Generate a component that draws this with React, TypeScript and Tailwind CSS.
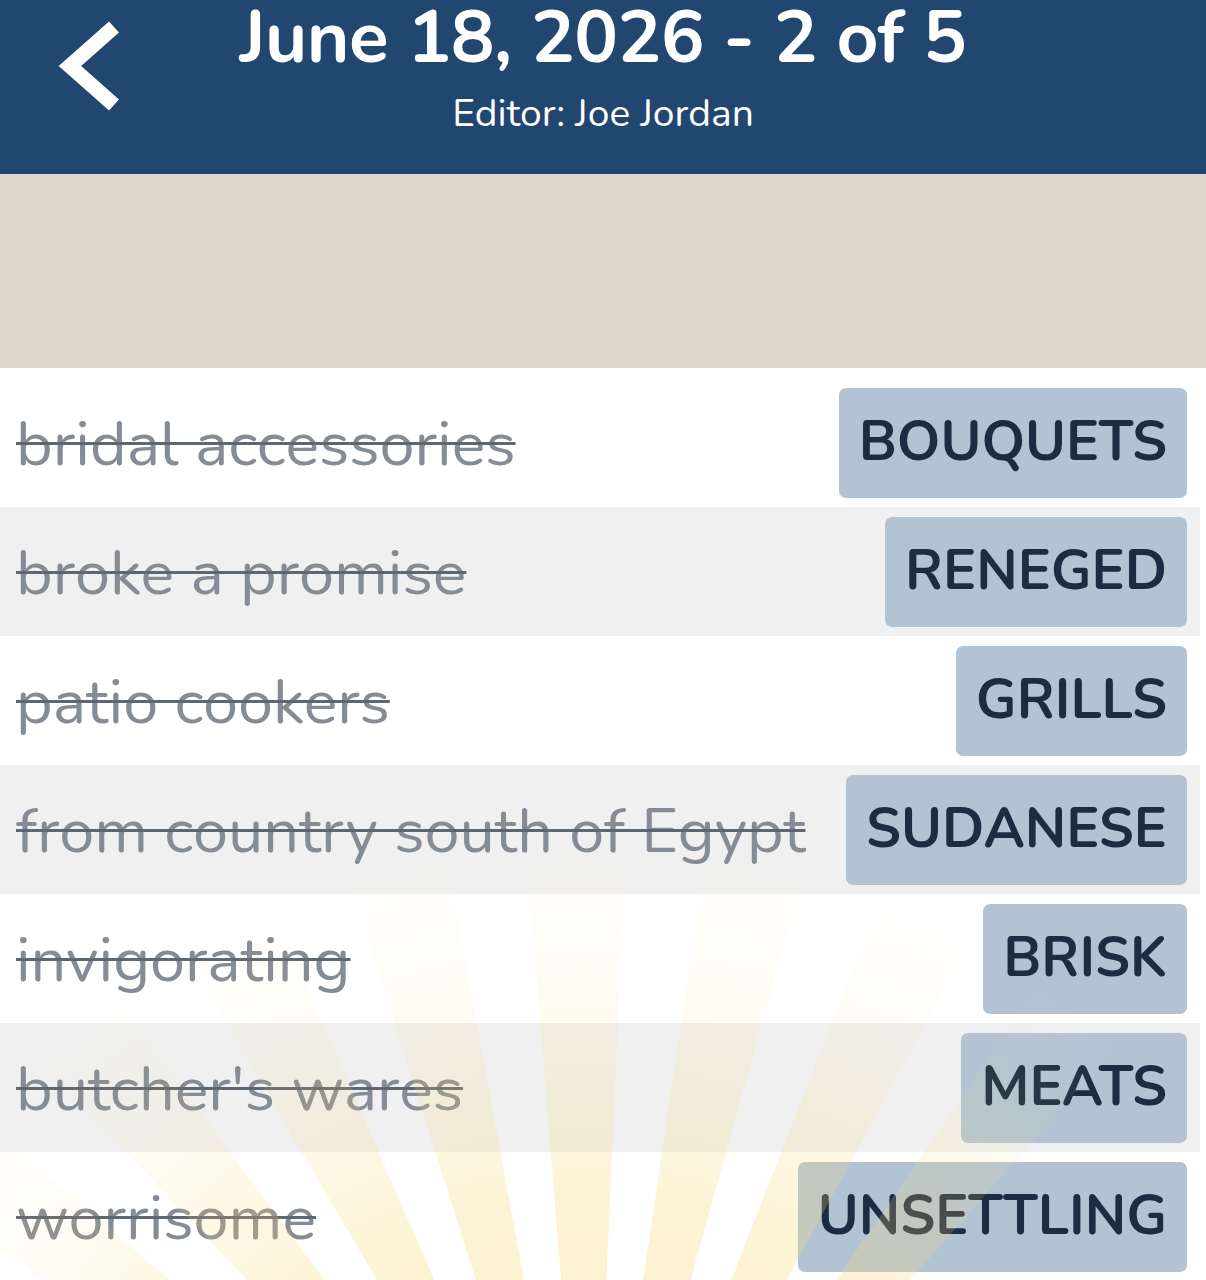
import React from "react";

const rows = [
  { clue: "bridal accessories", answer: "BOUQUETS" },
  { clue: "broke a promise", answer: "RENEGED" },
  { clue: "patio cookers", answer: "GRILLS" },
  { clue: "from country south of Egypt", answer: "SUDANESE" },
  { clue: "invigorating", answer: "BRISK" },
  { clue: "butcher's wares", answer: "MEATS" },
  { clue: "worrisome", answer: "UNSETTLING" },
];

const FONT = { fontFamily: '"Nunito", "Lato", "Open Sans", sans-serif' };

function Rays() {
  const ox = 590;
  const oy = 1640;
  const R = 1300;
  const angles = [-53, -40, -27, -14, -1, 12, 25, 38];
  const half = 3.6;
  const pt = (deg: number) => {
    const a = (deg * Math.PI) / 180;
    return `${ox + R * Math.sin(a)},${oy - R * Math.cos(a)}`;
  };
  return (
    <svg
      className="pointer-events-none absolute left-0 top-0"
      width={1206}
      height={1280}
      viewBox="0 0 1206 1280"
    >
      <defs>
        <radialGradient id="rayg" gradientUnits="userSpaceOnUse" cx={ox} cy={oy} r={800}>
          <stop offset="0.3" stopColor="#f8d877" stopOpacity="0.42" />
          <stop offset="0.55" stopColor="#f8d877" stopOpacity="0.3" />
          <stop offset="0.8" stopColor="#f8d877" stopOpacity="0.1" />
          <stop offset="1" stopColor="#f8d877" stopOpacity="0" />
        </radialGradient>
      </defs>
      {angles.map((c) => (
        <polygon key={c} points={`${ox},${oy} ${pt(c - half)} ${pt(c + half)}`} fill="url(#rayg)" />
      ))}
    </svg>
  );
}

export default function App() {
  return (
    <div className="relative h-[1280px] w-[1206px] overflow-hidden bg-white" style={FONT}>
      <header className="relative flex h-[174px] flex-col items-center bg-[#21466f] text-white">
        <svg className="absolute left-[56px] top-[18px]" width="72" height="100" viewBox="0 0 72 100">
          <polyline
            points="58,9 14,48 58,87"
            fill="none"
            stroke="#ffffff"
            strokeWidth="15"
            strokeLinecap="butt"
            strokeLinejoin="miter"
          />
        </svg>
        <div className="mt-[2px] text-[73px] font-bold leading-[73px] tracking-[-0.5px]">June 18, 2026 - 2 of 5</div>
        <div className="mt-[16px] text-[39px] leading-[46px]">Editor: Joe Jordan</div>
      </header>
      <div className="h-[194px] bg-[#dfd7cc]" />
      <div className="w-[1200px] pt-[10px]">
        {rows.map((r, i) => (
          <div
            key={r.clue}
            className={`flex h-[129px] items-center justify-between pl-[16px] pr-[13px] ${
              i % 2 === 1 ? "bg-[#f0f0f0]" : "bg-white"
            }`}
          >
            <span className="mt-[4px] text-[63px] leading-none text-[#858c95] line-through decoration-[#5e666f] decoration-[3px]">
              {r.clue}
            </span>
            <span className="flex h-[110px] items-center rounded-[7px] bg-[#b2c4d4] px-[20px] text-[55.5px] font-bold leading-none text-[#1c2c42]">
              {r.answer}
            </span>
          </div>
        ))}
      </div>
      <Rays />
    </div>
  );
}
